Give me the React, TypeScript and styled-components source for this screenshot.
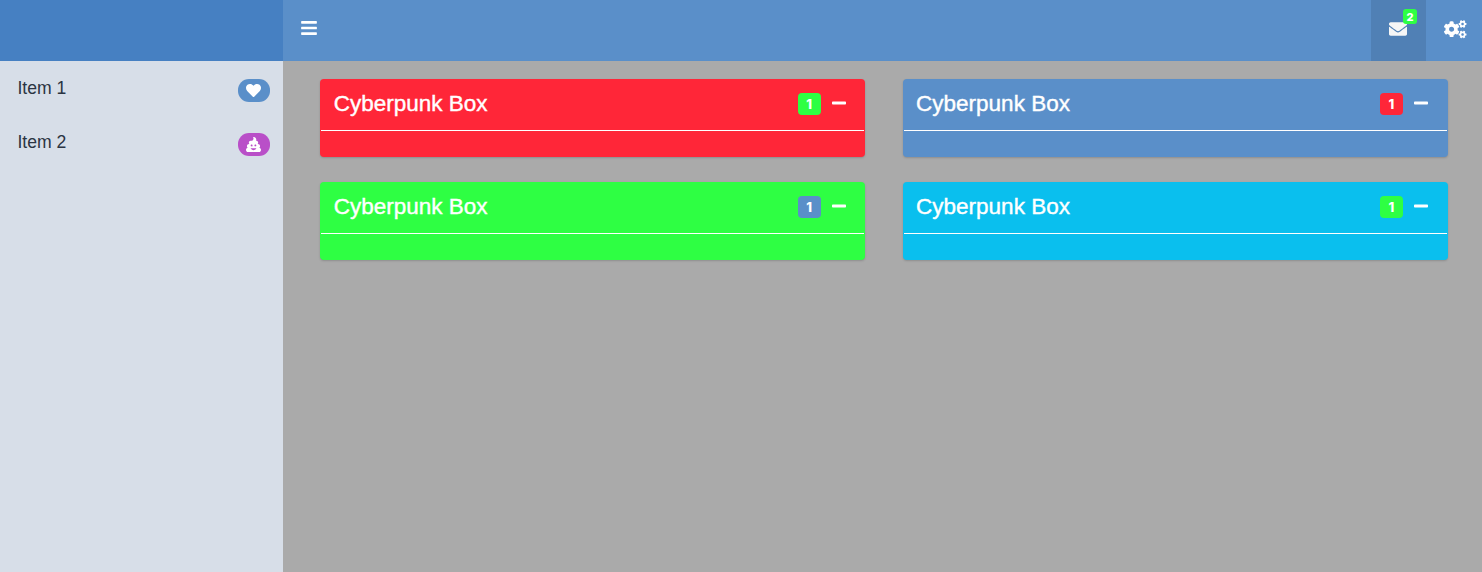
import React from "react";
import styled, { createGlobalStyle } from "styled-components";
import { FaBars, FaCogs, FaEnvelope, FaHeart, FaMinus, FaPoo } from "react-icons/fa";

const colors = {
  red: "#ff2638",
  blue: "#5a8fc9",
  green: "#2eff43",
  aqua: "#0abfee",
  purple: "#b94fc8",
};

const GlobalStyle = createGlobalStyle`
  * { box-sizing: border-box; }
  body {
    margin: 0;
    font-family: "Liberation Sans", Arial, sans-serif;
  }
`;

const Page = styled.div`
  display: grid;
  grid-template-columns: 283px 1fr;
  grid-template-rows: 61px 1fr;
  height: 100vh;
  overflow: hidden;
`;

const Brand = styled.div`
  background: #4680c2;
`;

const Navbar = styled.header`
  display: flex;
  justify-content: space-between;
  background: ${colors.blue};
  color: #fff;
`;

const NavGroup = styled.div`
  display: flex;
`;

const NavButton = styled.button<{ $active?: boolean; $width: number; $left: number; $top: number }>`
  display: flex;
  position: relative;
  width: ${(p) => p.$width}px;
  height: 61px;
  padding: ${(p) => p.$top}px 0 0 ${(p) => p.$left}px;
  border: 0;
  background: ${(p) => (p.$active ? "#5080b5" : "transparent")};
  color: ${(p) => (p.$active ? "#f6f6f6" : "#fff")};

  svg {
    flex: none;
  }
`;

const NavBadge = styled.span`
  position: absolute;
  top: 9px;
  right: 9px;
  width: 14px;
  height: 15px;
  border-radius: 3px;
  background: ${colors.green};
  color: #fff;
  font: 800 11px/16px Inter, "Liberation Sans", sans-serif;
  text-align: center;
`;

const Sidebar = styled.nav`
  background: #d7dee8;
`;

const MenuItem = styled.a`
  display: flex;
  justify-content: space-between;
  height: 54px;
  padding: 18px 13px 0 17.4px;
  color: #2b3442;
  font-size: 17.6px;
  line-height: 18px;
`;

const Pill = styled.span<{ $color: string }>`
  display: flex;
  align-items: center;
  justify-content: center;
  width: 32px;
  height: 23px;
  padding-right: 1px;
  border-radius: 11px;
  background: ${(p) => p.$color};
  color: #fff;
`;

const Content = styled.main`
  display: grid;
  grid-template-columns: 545px 545px;
  grid-auto-rows: 78px;
  gap: 25px 37.3px;
  padding: 18px 0 0 37.4px;
  background: #aaa;
`;

const Card = styled.section<{ $color: string }>`
  padding: 0 1px;
  border-radius: 4px;
  background: ${(p) => p.$color};
  color: #fff;
  box-shadow: 0 1px 2px rgba(0, 0, 0, 0.17);
`;

const CardHeader = styled.header`
  display: flex;
  justify-content: space-between;
  height: 52px;
  padding: 14px 17.8px 0 12.4px;
  border-bottom: 1px solid #fff;
`;

const CardTitle = styled.h3`
  margin: 0;
  font-size: 22.5px;
  font-weight: 400;
  line-height: 22px;
  -webkit-text-stroke: 0.4px currentColor;
`;

const CardTools = styled.div`
  display: flex;
  gap: 10px;
`;

const CardBadge = styled.span<{ $color: string }>`
  width: 23px;
  height: 22px;
  border-radius: 4px;
  background: ${(p) => p.$color};
  font: 800 13px/23px Inter, "Liberation Sans", sans-serif;
  text-align: center;
`;

const Collapse = styled.button`
  display: flex;
  width: 16px;
  height: 16px;
  margin-top: 2.4px;
  padding: 0;
  border: 0;
  background: none;
  color: #fff;
`;

const cards = [
  { color: colors.red, badge: colors.green },
  { color: colors.blue, badge: colors.red },
  { color: colors.green, badge: colors.blue },
  { color: colors.aqua, badge: colors.green },
];

export default function App() {
  return (
    <Page>
      <GlobalStyle />
      <Brand />
      <Navbar>
        <NavButton $width={52} $left={17} $top={19.4} aria-label="Toggle sidebar">
          <FaBars size={18} />
        </NavButton>
        <NavGroup>
          <NavButton $width={55} $left={18} $top={20.4} $active aria-label="Messages">
            <FaEnvelope size={18} />
            <NavBadge>2</NavBadge>
          </NavButton>
          <NavButton $width={56} $left={18.4} $top={18.4} aria-label="Settings">
            <FaCogs size={22.5} />
          </NavButton>
        </NavGroup>
      </Navbar>
      <Sidebar>
        <MenuItem>
          Item 1
          <Pill $color={colors.blue}>
            <FaHeart size={15} />
          </Pill>
        </MenuItem>
        <MenuItem>
          Item 2
          <Pill $color={colors.purple}>
            <FaPoo size={15} />
          </Pill>
        </MenuItem>
      </Sidebar>
      <Content>
        {cards.map((card) => (
          <Card key={card.color} $color={card.color}>
            <CardHeader>
              <CardTitle>Cyberpunk Box</CardTitle>
              <CardTools>
                <CardBadge $color={card.badge}>1</CardBadge>
                <Collapse aria-label="Collapse">
                  <FaMinus size={16} />
                </Collapse>
              </CardTools>
            </CardHeader>
          </Card>
        ))}
      </Content>
    </Page>
  );
}
